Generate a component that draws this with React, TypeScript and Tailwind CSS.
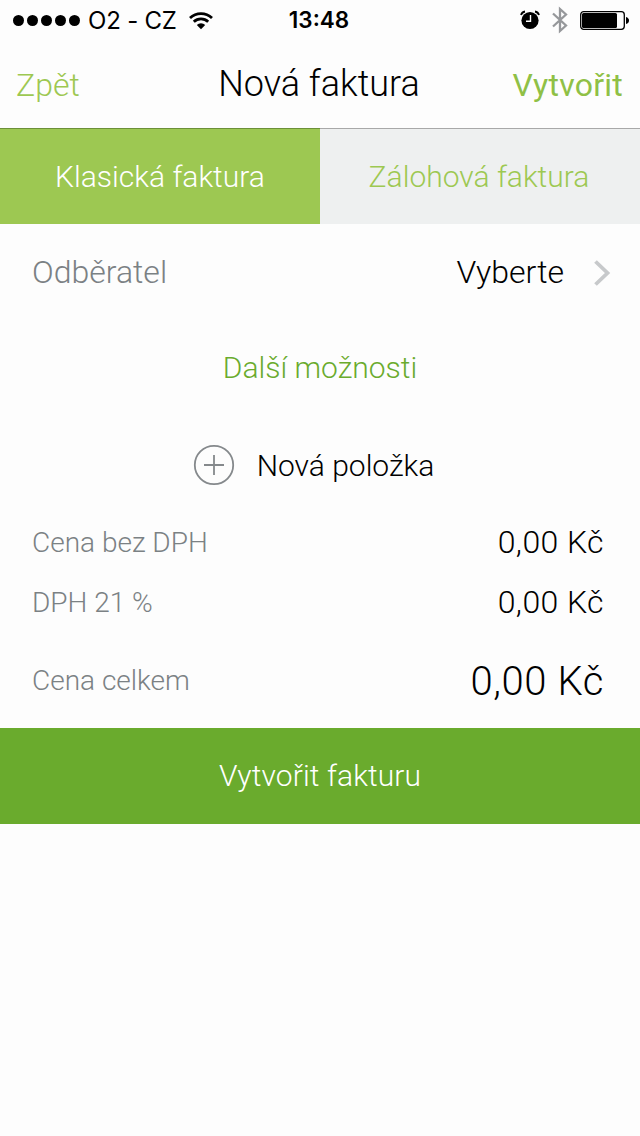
const totals = [
  { label: "Cena bez DPH", value: "0,00 Kč" },
  { label: "DPH 21 %", value: "0,00 Kč" },
];

function StatusBar() {
  return (
    <div className="relative flex h-10 items-center justify-between pr-[11px] pl-3 font-[Inter,sans-serif] text-2xl leading-none text-black">
      <div className="flex items-center pt-0.5">
        <svg width="69" height="12" viewBox="0 0 69 12">
          {[6.5, 20.5, 34.5, 48.5, 62.5].map((x) => (
            <circle key={x} cx={x} cy="5.500" r="5.500" />
          ))}
        </svg>
        <span className="ml-[7px] font-normal tracking-[-0.2px]">O2 - CZ</span>
        <svg className="ml-3" width="24" height="18" viewBox="0 0 24 18">
          <path d="M1 6A15.800 15.800 0 0 1 23 6" fill="none" stroke="#000" strokeWidth="2.800" />
          <path d="M4.800 9.800A10.400 10.400 0 0 1 19.200 9.800" fill="none" stroke="#000" strokeWidth="2.800" />
          <path d="M7.800 13A6 6 0 0 1 16.200 13L12 17.200Z" />
        </svg>
      </div>
      <span className="absolute top-[9px] left-[319px] -translate-x-1/2 text-[22.5px] font-semibold">13:48</span>
      <div className="flex items-center">
        <svg width="20" height="20" viewBox="0 0 20 20">
          <circle cx="10" cy="10.500" r="8.600" />
          <path d="M1 5Q2 2 5 1.500M19 5Q18 2 15 1.500" fill="none" stroke="#000" strokeWidth="1.800" />
          <path d="M10.500 5V11.300H6" fill="none" stroke="#fff" strokeWidth="1.400" />
        </svg>
        <svg className="ml-3" width="16" height="28" viewBox="0 0 16 28">
          <path d="M1 7.500L14 19.500L8 25V3L14 8.500L1 20.500" fill="none" stroke="#96989b" strokeWidth="2.300" />
        </svg>
        <svg className="ml-3" width="49" height="20" viewBox="0 0 49 20">
          <rect x=".7" y="1.700" width="43.600" height="17.600" rx="3" fill="none" stroke="#000" strokeWidth="1.300" />
          <rect x="2" y="3" width="35" height="15" rx="1.500" />
          <path d="M46 7Q49 8 49 10.500T46 14Z" />
        </svg>
      </div>
    </div>
  );
}

export default function App() {
  return (
    <div className="min-h-screen w-full bg-[#fdfdfd] font-[Roboto,sans-serif] font-light text-black">
      <StatusBar />
      <header className="relative flex h-[89px] items-center justify-between border-b border-[#a8a8a8] px-4 text-[32px]">
        <button className="pt-0.5 text-[#9dc852]">Zpět</button>
        <h1 className="absolute left-[319px] -translate-x-1/2 text-[36px] whitespace-nowrap">Nová faktura</h1>
        <button className="pt-0.5 pr-px font-normal tracking-[0.25px] text-[#8fc046]">Vytvořit</button>
        <div className="absolute -bottom-px left-0 h-px w-1/2 bg-[#6c9039]" />
      </header>
      <div className="grid h-[95px] grid-cols-2 text-[30px]">
        <button className="bg-[#9dc852] text-white">Klasická faktura</button>
        <button className="bg-[#eef0f0] pr-0.5 text-[#9dc852]">Zálohová faktura</button>
      </div>
      <div className="flex h-24 items-center pr-7 pl-8 text-[32px]">
        <span className="flex-1 text-[#7b8184]">Odběratel</span>
        <span>Vyberte</span>
        <svg className="mt-0.5 ml-7" width="20" height="28" viewBox="0 0 20 28">
          <path d="M3.500 2.500L15.500 14L3.500 25.500" fill="none" stroke="#c7c9cb" strokeWidth="3.800" />
        </svg>
      </div>
      <button className="flex h-24 w-full items-center justify-center pb-0.5 text-[30px] text-[#6aab2d]">Další možnosti</button>
      <button className="flex h-24 w-full items-center justify-center gap-[22px] pt-0.5 pr-[13px] text-[30px]">
        <svg width="42" height="42" viewBox="0 0 42 42" fill="none" stroke="#85898c" strokeWidth="1.800">
          <circle cx="21" cy="21" r="19.200" />
          <path d="M21 11V31M11 21H31" />
        </svg>
        Nová položka
      </button>
      <div className="flex flex-col pr-9 pl-8">
        {totals.map((row) => (
          <div key={row.label} className="flex h-[60px] items-center justify-between">
            <span className="pt-0.5 text-[28px] text-[#7b8184]">{row.label}</span>
            <span className="text-[32px] tracking-[0.4px]">{row.value}</span>
          </div>
        ))}
        <div className="flex h-24 items-center justify-between">
          <span className="pt-0.5 text-[28px] text-[#7b8184]">Cena celkem</span>
          <span className="pt-1 text-[40px] tracking-[0.6px]">{totals[0].value}</span>
        </div>
      </div>
      <button className="h-24 w-full bg-[#6aab2d] pb-0.5 text-[30px] tracking-[0.1px] text-white">Vytvořit fakturu</button>
    </div>
  );
}
